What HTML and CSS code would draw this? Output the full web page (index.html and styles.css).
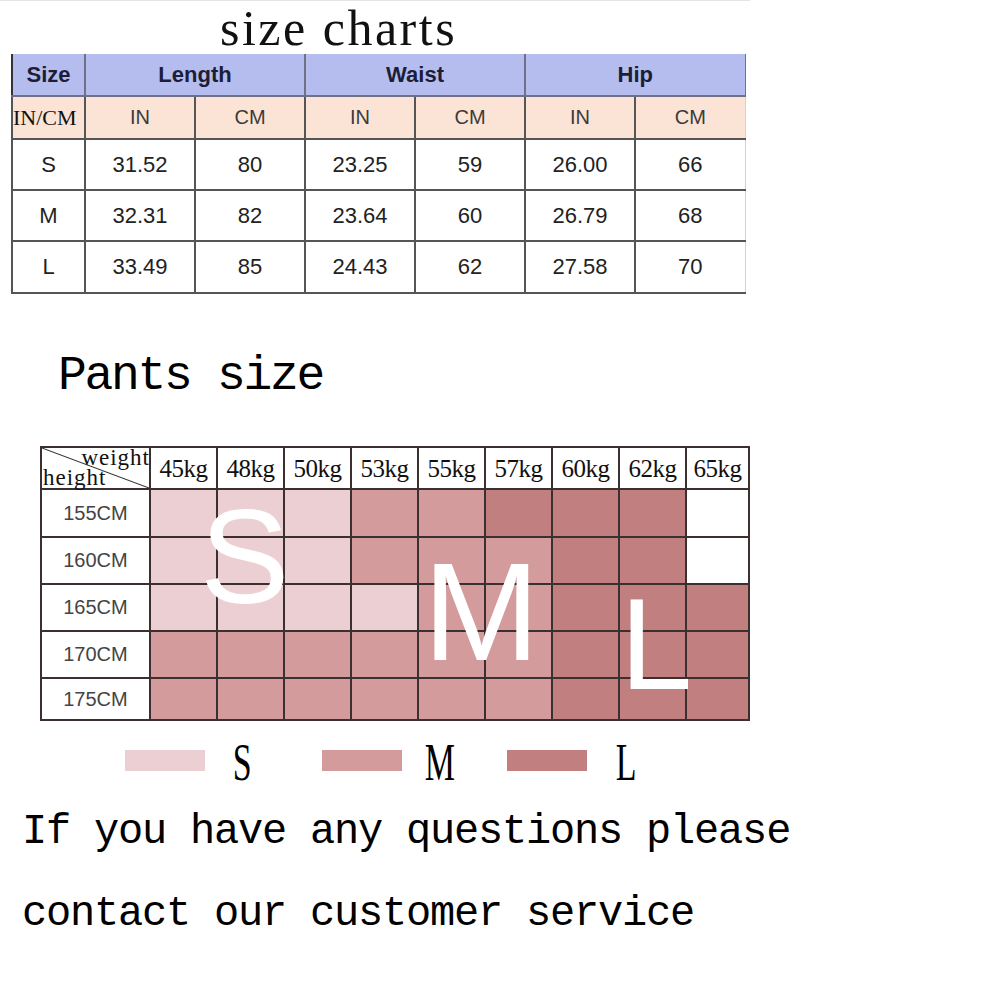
FILE: index.html
```html
<!DOCTYPE html>
<html>
<head>
<meta charset="utf-8">
<title>size charts</title>
<link rel="stylesheet" href="styles.css">
</head>
<body>
<div class="page">
  <h1 class="title">size charts</h1>
  <table class="chart">
    <colgroup>
      <col class="c-size"><col class="c-val"><col class="c-val"><col class="c-val"><col class="c-val"><col class="c-val"><col class="c-val">
    </colgroup>
    <tr class="hdr"><th>Size</th><th colspan="2">Length</th><th colspan="2">Waist</th><th colspan="2">Hip</th></tr>
    <tr class="unit"><td class="unit-label">IN/CM</td><td>IN</td><td>CM</td><td>IN</td><td>CM</td><td>IN</td><td>CM</td></tr>
    <tr class="row"><td>S</td><td>31.52</td><td>80</td><td>23.25</td><td>59</td><td>26.00</td><td>66</td></tr>
    <tr class="row"><td>M</td><td>32.31</td><td>82</td><td>23.64</td><td>60</td><td>26.79</td><td>68</td></tr>
    <tr class="row row-last"><td>L</td><td>33.49</td><td>85</td><td>24.43</td><td>62</td><td>27.58</td><td>70</td></tr>
  </table>

  <h2 class="pants-title">Pants size</h2>

  <div class="grid-wrap">
    <table class="pants">
      <colgroup>
        <col class="p-head"><col class="p-col"><col class="p-col"><col class="p-col"><col class="p-col"><col class="p-col"><col class="p-col"><col class="p-col"><col class="p-col"><col class="p-last">
      </colgroup>
      <tr class="p-hdr">
        <th class="diag"><div class="diag-in"><span class="d-w">weight</span><span class="d-h">height</span></div></th>
        <th>45kg</th><th>48kg</th><th>50kg</th><th>53kg</th><th>55kg</th><th>57kg</th><th>60kg</th><th>62kg</th><th>65kg</th>
      </tr>
      <tr class="r155"><td class="h">155CM</td><td class="s"></td><td class="s"></td><td class="s"></td><td class="m"></td><td class="m"></td><td class="l"></td><td class="l"></td><td class="l"></td><td></td></tr>
      <tr class="r160"><td class="h">160CM</td><td class="s"></td><td class="s"></td><td class="s"></td><td class="m"></td><td class="m"></td><td class="m"></td><td class="l"></td><td class="l"></td><td></td></tr>
      <tr class="r165"><td class="h">165CM</td><td class="s"></td><td class="s"></td><td class="s"></td><td class="s"></td><td class="m"></td><td class="m"></td><td class="l"></td><td class="l"></td><td class="l"></td></tr>
      <tr class="r170"><td class="h">170CM</td><td class="m"></td><td class="m"></td><td class="m"></td><td class="m"></td><td class="m"></td><td class="m"></td><td class="l"></td><td class="l"></td><td class="l"></td></tr>
      <tr class="r175"><td class="h">175CM</td><td class="m"></td><td class="m"></td><td class="m"></td><td class="m"></td><td class="m"></td><td class="m"></td><td class="l"></td><td class="l"></td><td class="l"></td></tr>
    </table>
    <span class="big big-s">S</span>
    <span class="big big-m">M</span>
    <span class="big big-l">L</span>
  </div>

  <div class="legend">
    <div class="legend-item item-s"><span class="swatch s"></span><span class="legend-label">S</span></div>
    <div class="legend-item item-m"><span class="swatch m"></span><span class="legend-label">M</span></div>
    <div class="legend-item item-l"><span class="swatch l"></span><span class="legend-label">L</span></div>
  </div>

  <p class="note">If you have any questions please<br>contact our customer service</p>
</div>
</body>
</html>
```

FILE: styles.css
```css
* { box-sizing: border-box; }

body {
  margin: 0;
  background: #fff;
}

.page {
  width: 1000px;
}

.title {
  margin: 0;
  width: 750px;
  height: 54px;
  border-top: 1px solid #e4e4e4;
  padding-left: 220px;
  font: 400 50px/54px "Liberation Serif", "Times New Roman", serif;
  letter-spacing: 2.5px;
  color: #111;
}

/* ---------- size chart ---------- */
.chart {
  margin-left: 11px;
  width: 734px;
  border-collapse: collapse;
  table-layout: fixed;
  font-family: "Liberation Sans", Arial, sans-serif;
  text-align: center;
}

.chart .c-size { width: 73px; }
.chart .c-val { width: 110px; }

.chart th,
.chart td {
  border: 2px solid #555;
  padding: 0;
}

.chart th:last-child,
.chart td:last-child {
  border-right: 1px solid #d2d2d2;
}

.chart .hdr th {
  border-top: none;
  height: 42px;
  background: #b5bdef;
  border-color: #707086;
  font-size: 22px;
  font-weight: 700;
  color: #1d1d38;
}

.chart .hdr th:first-child {
  border-left-color: #333;
}

.chart .unit td {
  height: 43px;
  background: #fbe3d5;
  font-size: 20px;
  color: #3a3a3a;
}

.chart .unit .unit-label {
  padding-right: 8px;
  font-family: "Liberation Serif", "Times New Roman", serif;
  font-size: 22px;
  color: #111;
}

.chart .row td {
  height: 51px;
  font-size: 22px;
  color: #222;
}

.chart .row-last td {
  height: 52px;
}

/* ---------- pants size ---------- */
.pants-title {
  margin: 58px 0 46px;
  padding-left: 58px;
  font: 400 48px/48px "Liberation Mono", "Courier New", monospace;
  letter-spacing: -2.3px;
  color: #000;
}

.grid-wrap {
  position: relative;
  margin-left: 40px;
  width: 709px;
}

.pants {
  width: 709px;
  border-collapse: collapse;
  table-layout: fixed;
}

.pants .p-head { width: 109px; }
.pants .p-col { width: 67px; }
.pants .p-last { width: 63px; }

.pants th,
.pants td {
  border: 2px solid #3b2f2f;
  padding: 0;
}

.pants .p-hdr th {
  height: 42px;
  background: #fff;
  font: 400 25px/1 "Liberation Serif", "Times New Roman", serif;
  letter-spacing: -0.5px;
  color: #111;
  text-align: center;
}

.pants .p-hdr .diag {
  position: relative;
  background: linear-gradient(to top right, transparent calc(50% - 1px), #333 50%, transparent calc(50% + 1px));
}

.diag-in {
  display: flex;
  flex-direction: column;
  height: 40px;
  font: 400 23px/20px "Liberation Serif", "Times New Roman", serif;
  letter-spacing: 1px;
}

.d-w {
  align-self: flex-end;
  margin-right: -1px;
}

.d-h {
  align-self: flex-start;
  margin-left: 1px;
}

.pants td.h {
  font: 400 20px "Liberation Sans", Arial, sans-serif;
  color: #444;
  text-align: center;
}

.pants .r155 td { height: 48px; }
.pants .r160 td { height: 47px; }
.pants .r165 td { height: 47px; }
.pants .r170 td { height: 47px; }
.pants .r175 td { height: 42px; }

.s { background: #eccfd2; }
.m { background: #d49b9d; }
.l { background: #c17f80; }

.big {
  position: absolute;
  font-family: "Liberation Sans", Arial, sans-serif;
  font-weight: 400;
  line-height: 1;
  color: #fff;
}

.big-s {
  left: 160px;
  top: 44px;
  font-size: 134px;
}

.big-m {
  left: 383px;
  top: 96px;
  font-size: 140px;
}

.big-l {
  left: 580px;
  top: 133px;
  font-size: 130px;
}

/* ---------- legend ---------- */
.legend {
  display: flex;
  align-items: center;
  height: 21px;
  margin: 29px 0 0 125px;
}

.legend-item {
  display: flex;
  align-items: center;
  gap: 26px;
}

.item-s { width: 197px; }
.item-m { width: 185px; gap: 20px; }
.item-l { gap: 27px; }

.swatch {
  width: 80px;
  height: 21px;
}

.legend-label {
  display: inline-block;
  font: 400 40px/1 "Liberation Serif", "Times New Roman", serif;
  color: #000;
  transform: translateY(2px) scale(0.85, 1.3);
}

/* ---------- note ---------- */
.note {
  margin: 20px 0 0;
  padding-left: 22px;
  font: 400 42px/82px "Liberation Mono", "Courier New", monospace;
  letter-spacing: -1.2px;
  color: #000;
}
```
